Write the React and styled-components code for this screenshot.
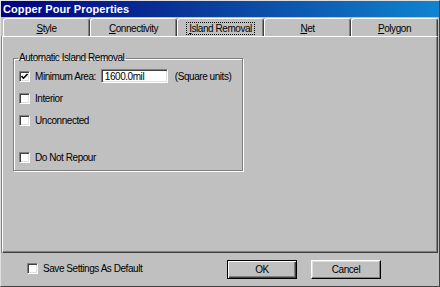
import React from "react";
import styled, { createGlobalStyle } from "styled-components";

const GlobalStyle = createGlobalStyle`
    html, body {
        margin: 0;
        padding: 0;
        background: #c0c0c0;
    }
    * {
        box-sizing: border-box;
    }
`

// MS Sans Serif is narrower than Arial, so squeeze the letters a little
const UI_FONT = `"Liberation Sans", Arial, sans-serif`

const SWindow = styled.div`
    width: 440px;
    height: 287px;
    display: flex;
    flex-direction: column;
    background: #c0c0c0;
    border-top: 1px solid #dfdfdf;
    border-left: 1px solid #dfdfdf;
    border-right: 1px solid #404040;
    border-bottom: 1px solid #404040;
    font-family: ${UI_FONT};
    font-size: 10px;
    letter-spacing: -0.45px;
    color: #000;
`

const STitleBar = styled.div`
    height: 16px;
    margin: 0 0 1px 0;
    padding-left: 2px;
    display: flex;
    align-items: center;
    background: linear-gradient(90deg, #000080 0%, #0a3a9a 45%, #1084d0 100%);
    color: #fff;
    font-weight: bold;
    font-size: 11px;
    letter-spacing: 0.1px;
`

const SBody = styled.div`
    flex: 1;
    display: flex;
    flex-direction: column;
    padding: 0 1px;
`

const STabRow = styled.div`
    display: flex;
    height: 18px;
    padding: 0 0 0 1px;
`

const STab = styled.div`
    flex: 1;
    display: flex;
    align-items: center;
    justify-content: center;
    border-top: 1px solid #fff;
    border-left: 1px solid #fff;
    border-right: 1px solid #404040;
    border-top-left-radius: 4px 3px;
    border-top-right-radius: 4px 3px;
    box-shadow: inset -1px 0 0 #808080;
    padding-top: 1px;
`

const STabLabel = styled.span`
    padding: 0 2px;
    line-height: 11px;
    border: 1px dotted ${p => p.$focused ? "#000" : "transparent"};
`

const SPanel = styled.div`
    flex: 1;
    border-top: 1px solid #fff;
    border-left: 1px solid #fff;
    border-right: 1px solid #404040;
    border-bottom: 1px solid #404040;
    box-shadow: inset -1px -1px 0 #808080, -1px 0 0 #808080;
    padding: 15px 0 0 10px;
`

const SGroup = styled.fieldset`
    margin: 0;
    padding: 0 0 4px 0;
    min-width: 0;
    width: 230px;
    height: 119px;
    border: 1px solid #808080;
    box-shadow: 1px 1px 0 #fff, inset 1px 1px 0 #fff;
`

const SLegend = styled.legend`
    margin-left: 4px;
    padding: 0 2px 0 1px;
    line-height: 12px;
`

const SRow = styled.div`
    display: flex;
    align-items: center;
    height: 18px;
    padding-left: 5px;
    margin-top: ${p => p.$gap}px;
`

const SCheckBox = styled.span`
    width: 11px;
    height: 11px;
    flex: none;
    display: flex;
    align-items: center;
    justify-content: center;
    background: #fff;
    border-top: 1px solid #808080;
    border-left: 1px solid #808080;
    border-right: 1px solid #fff;
    border-bottom: 1px solid #fff;
    box-shadow: inset 1px 1px 0 #404040, inset -1px -1px 0 #dfdfdf;
`

const SLabel = styled.span`
    margin-left: 5px;
    white-space: nowrap;
`

const SInput = styled.div`
    width: 67px;
    height: 14px;
    margin-left: 5px;
    padding-left: 3px;
    display: flex;
    align-items: center;
    background: #fff;
    border-top: 1px solid #808080;
    border-left: 1px solid #808080;
    border-right: 1px solid #fff;
    border-bottom: 1px solid #fff;
    box-shadow: inset 1px 1px 0 #404040, inset -1px -1px 0 #dfdfdf;
`

const SUnits = styled.span`
    margin-left: 7px;
    white-space: nowrap;
`

const SFooter = styled.div`
    height: 33px;
    flex: none;
    display: flex;
    align-items: center;
    padding: 0 57px 0 25px;
`

const SFooterCheck = styled.div`
    display: flex;
    align-items: center;
    margin-top: -3px;
`

const SButtons = styled.div`
    margin-left: auto;
    display: flex;
    gap: 14px;
    margin-top: -1px;
`

const SButton = styled.div`
    width: 70px;
    height: 19px;
    display: flex;
    align-items: center;
    justify-content: center;
    background: #c0c0c0;
    ${p => p.$default
        ? `
        border: 1px solid #000;
        box-shadow: inset 1px 1px 0 #fff, inset -1px -1px 0 #404040, inset -2px -2px 0 #808080;
        `
        : `
        border-top: 1px solid #fff;
        border-left: 1px solid #fff;
        border-right: 1px solid #000;
        border-bottom: 1px solid #000;
        box-shadow: inset -1px -1px 0 #808080, inset 1px 1px 0 #dfdfdf;
        `}
`

function CheckBox({ checked }) {
    return (
        <SCheckBox>
            {checked && (
                <svg width="7" height="7" viewBox="0 0 7 7">
                    <path d="M0.5 3 L2.5 5.2 L6.5 1" fill="none" stroke="#000" strokeWidth="1.6" />
                </svg>
            )}
        </SCheckBox>
    )
}

const tabs = [
    { first: "S", rest: "tyle" },
    { first: "C", rest: "onnectivity" },
    { first: "I", rest: "sland Removal", active: true },
    { first: "N", rest: "et" },
    { first: "P", rest: "olygon" },
]

export default function App() {
    return (
        <>
            <GlobalStyle />
            <SWindow>
                <STitleBar>Copper Pour Properties</STitleBar>
                <SBody>
                    <STabRow>
                        {tabs.map(t => (
                            <STab key={t.first}>
                                <STabLabel $focused={t.active}><u>{t.first}</u>{t.rest}</STabLabel>
                            </STab>
                        ))}
                    </STabRow>
                    <SPanel>
                        <SGroup>
                            <SLegend>Automatic Island Removal</SLegend>
                            <SRow $gap={3}>
                                <CheckBox checked />
                                <SLabel>Minimum Area:</SLabel>
                                <SInput>1600.0mil</SInput>
                                <SUnits>(Square units)</SUnits>
                            </SRow>
                            <SRow $gap={4}>
                                <CheckBox />
                                <SLabel>Interior</SLabel>
                            </SRow>
                            <SRow $gap={4}>
                                <CheckBox />
                                <SLabel>Unconnected</SLabel>
                            </SRow>
                            <SRow $gap={19}>
                                <CheckBox />
                                <SLabel>Do Not Repour</SLabel>
                            </SRow>
                        </SGroup>
                    </SPanel>
                    <SFooter>
                        <SFooterCheck>
                            <CheckBox />
                            <SLabel>Save Settings As Default</SLabel>
                        </SFooterCheck>
                        <SButtons>
                            <SButton $default>OK</SButton>
                            <SButton>Cancel</SButton>
                        </SButtons>
                    </SFooter>
                </SBody>
            </SWindow>
        </>
    )
}
